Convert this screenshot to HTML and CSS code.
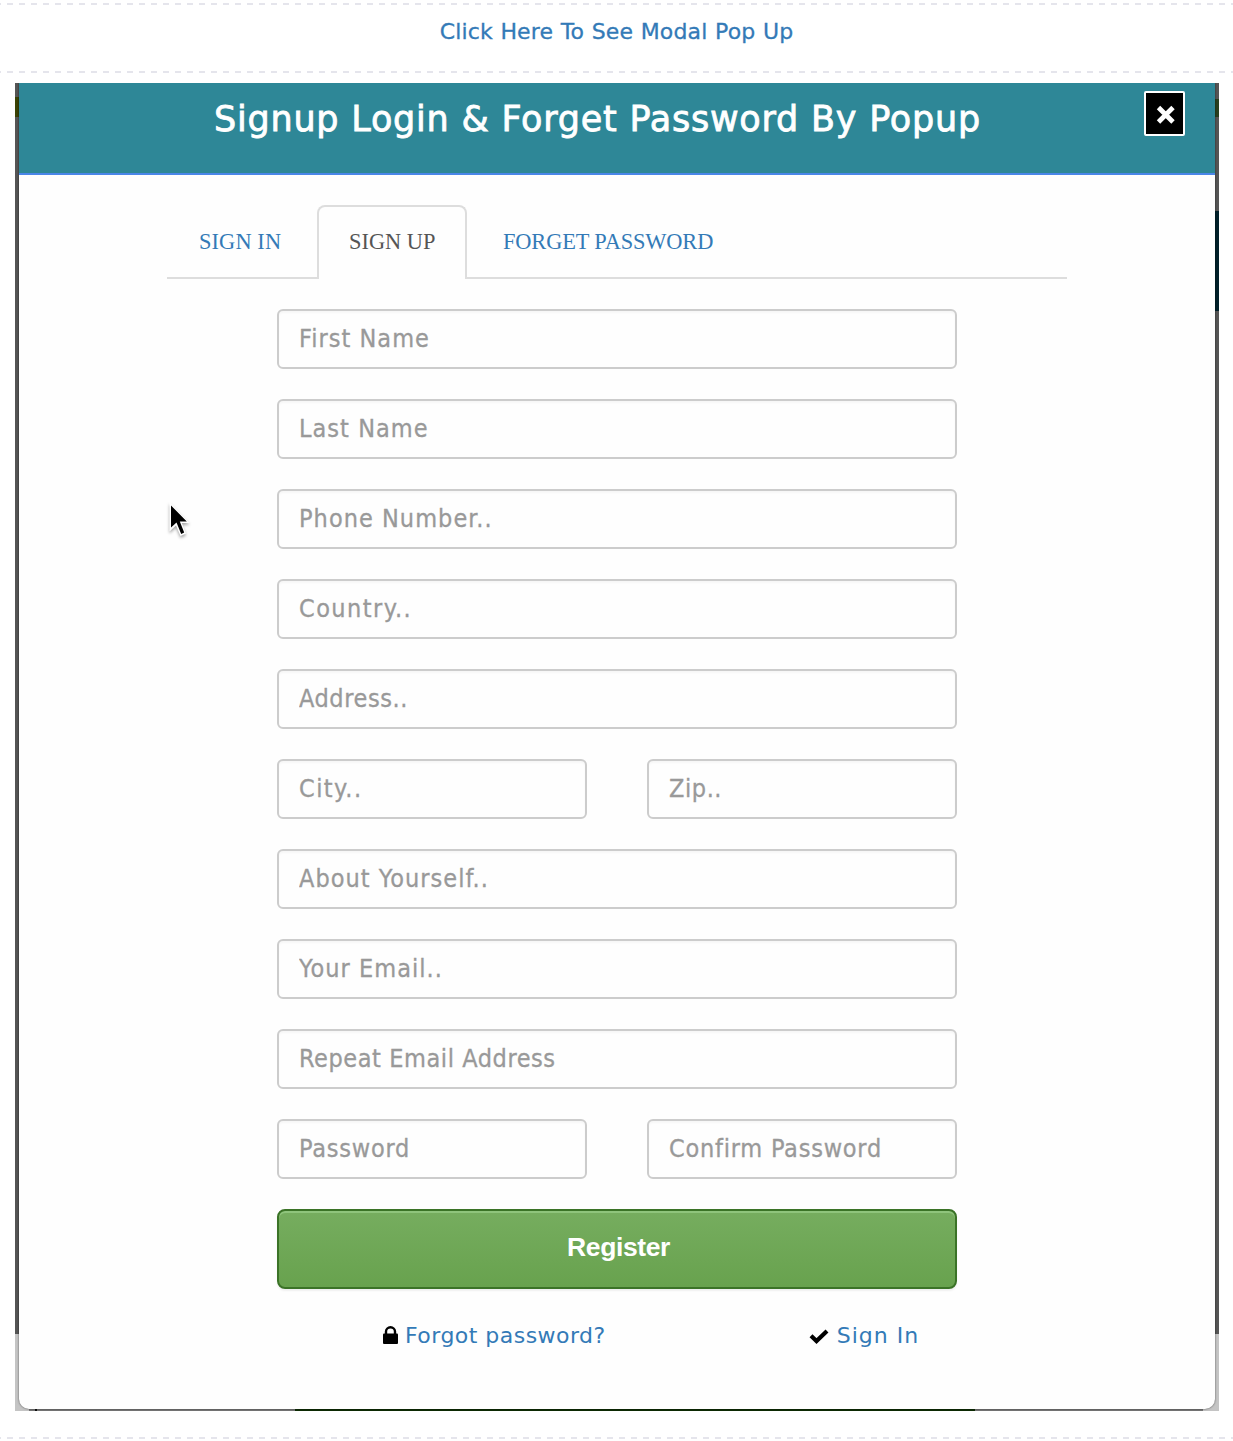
FILE: index.html
```html
<!DOCTYPE html>
<html lang="en">
<head>
<meta charset="utf-8">
<title>Signup Login &amp; Forget Password</title>
<link rel="stylesheet" href="styles.css">
</head>
<body>
<div class="divider"></div>
<p class="trigger"><a href="#">Click Here To See Modal Pop Up</a></p>
<div class="divider"></div>
<main class="backdrop">
  <section class="modal">
    <header class="modal-header">
      <h1 class="modal-title">Signup Login &amp; Forget Password By Popup</h1>
      <button class="close" type="button" aria-label="Close">
        <svg width="22" height="22" viewBox="0 0 22 22"><path d="M4.500 4.500 19 19M19 4.500 4.500 19" stroke="#fff" stroke-width="4.800" fill="none"/></svg>
      </button>
    </header>
    <nav class="tabs">
      <a class="tab" href="#">SIGN IN</a>
      <a class="tab active" href="#">SIGN UP</a>
      <a class="tab" href="#">FORGET PASSWORD</a>
    </nav>
    <form class="form">
      <input class="field wide" placeholder="First Name">
      <input class="field wide" placeholder="Last Name">
      <input class="field wide" placeholder="Phone Number..">
      <input class="field wider" placeholder="Country..">
      <input class="field tight" placeholder="Address..">
      <input class="field half wider" placeholder="City..">
      <input class="field half tight" placeholder="Zip..">
      <input class="field wide" placeholder="About Yourself..">
      <input class="field wide" placeholder="Your Email..">
      <input class="field tight" placeholder="Repeat Email Address">
      <input class="field half" placeholder="Password">
      <input class="field half" placeholder="Confirm Password">
      <button class="register" type="button">Register</button>
    </form>
    <footer class="links">
      <span class="link"><svg class="lock" width="15" height="18" viewBox="0 0 15 18"><path d="M3 8V5.500a4.500 4.200 0 0 1 9 0V8" fill="none" stroke="#000" stroke-width="2.400"/><rect y="7.500" width="15" height="10.500" rx="1"/></svg><a href="#">Forgot password?</a></span>
      <span class="link"><svg class="check" width="20" height="15" viewBox="0 0 20 15"><path d="M2 6.800 7.500 12 18 2" fill="none" stroke="#000" stroke-width="4.200"/></svg><a class="signin" href="#">Sign In</a></span>
    </footer>
    <svg class="cursor" width="26" height="38" viewBox="0 0 26 38"><path d="M2.500 2V31.500L9 25.500 13.500 36 19 33.500 14.800 23H22.500Z" fill="#fff"/><path d="M4 5.500V27.500L9.500 22.500 14.200 34 17.200 32.500 12.800 21.500H19.800Z"/></svg>
  </section>
</main>
<div class="divider"></div>
</body>
</html>
```
FILE: styles.css
```css
* { box-sizing: border-box; }
body {
  margin: 0;
  padding-top: 3px;
  background: #fff;
  font-family: "DejaVu Sans", sans-serif;
}
a { color: #337ab7; text-decoration: none; }
.divider {
  height: 2px;
  background: repeating-linear-gradient(90deg, #e5e5ec 0 6px, transparent 6px 12px) -5px 0 / 1248px 2px;
}
.trigger {
  height: 66px;
  margin: 0;
  padding-top: 11px;
  font-size: 22px;
  line-height: 32px;
  letter-spacing: 0.15px;
  word-spacing: 0.4px;
  text-align: center;
  -webkit-text-stroke: 0.3px #337ab7;
}
.backdrop {
  width: 1204px;
  height: 1328px;
  margin: 10px 14px 26px 15px;
  padding: 0 4px 2px;
  background:
    linear-gradient(#0d2c04, #0d2c04) 280px 100% / 680px 2px no-repeat,
    linear-gradient(#111, #111) 20px 100% / 2px 2px no-repeat,
    linear-gradient(#777, #777) 14px 100% / 1174px 2px no-repeat,
    linear-gradient(#3b4205, #3b4205) 0 14px / 4px 20px no-repeat,
    linear-gradient(#28401f, #28401f) 100% 16px / 4px 18px no-repeat,
    linear-gradient(#00202a, #00202a) 100% 128px / 4px 100px no-repeat,
    linear-gradient(#555 0 1251px, #c4c4c4 1251px);
}
.modal {
  position: relative;
  height: 1326px;
  background: #fefefe;
  border-radius: 0 0 10px 10px;
  box-shadow: 0 0 2px rgba(0, 0, 0, .65);
  clip-path: inset(0 -2px -2px -2px);
}
.modal-header {
  display: flex;
  justify-content: space-between;
  height: 92px;
  padding: 8px 30px 0 195px;
  background: #2e8797;
  border-bottom: 2px solid #4a86e8;
}
.modal-title {
  margin: 0;
  color: #fff;
  font-size: 35px;
  font-weight: 400;
  line-height: 56px;
  letter-spacing: 0.77px;
  white-space: nowrap;
  -webkit-text-stroke: 0.8px #fff;
}
.close {
  display: grid;
  place-items: center;
  width: 41px;
  height: 45px;
  padding: 0;
  background: #000;
  border: 2px solid #fff;
  border-radius: 2px;
}
.tabs {
  display: flex;
  gap: 4px;
  width: 900px;
  height: 74px;
  margin: 30px 0 0 148px;
  border-bottom: 2px solid #ddd;
}
.tab {
  height: 74px;
  padding: 0 30px;
  border: 2px solid transparent;
  border-bottom: 0;
  font: 22.4px/69px "Liberation Serif", serif;
  letter-spacing: -0.13px;
  white-space: nowrap;
}
.tab:first-child {
  width: 146px;
  letter-spacing: 0.1px;
}
.tab.active {
  width: 150px;
  color: #555;
  background: #fefefe;
  border-color: #ddd;
  border-radius: 8px 8px 0 0;
  letter-spacing: 0;
}
.form {
  display: grid;
  grid-template-columns: 310px 310px;
  gap: 30px 60px;
  margin: 30px 0 0 258px;
}
.field {
  grid-column: span 2;
  width: 100%;
  height: 60px;
  padding: 0 20px 2px;
  border: 2px solid #ccc;
  border-radius: 6px;
  background: #fefefe;
  box-shadow: inset 0 2px 2px rgba(0, 0, 0, .03);
  font: 25px "DejaVu Sans Condensed", "DejaVu Sans", sans-serif;
  font-stretch: condensed;
  letter-spacing: 0.77px;
  -webkit-text-stroke: 0.3px #999;
}
.field.wide { letter-spacing: 1.03px; }
.field.wider { letter-spacing: 1.45px; }
.field.tight { letter-spacing: 0.57px; }
.field.half { grid-column: span 1; }
.field::placeholder { color: #999; opacity: 1; }
.register {
  grid-column: span 2;
  height: 80px;
  padding: 0 0 3px 3px;
  color: #fff;
  font: bold 26.5px "Liberation Sans", sans-serif;
  letter-spacing: -0.4px;
  background: linear-gradient(#76ad5f, #68a24e);
  border: 2px solid #3b7327;
  border-radius: 8px;
  box-shadow: inset 0 2px 0 #8fc47c, 0 2px 2px rgba(0, 0, 0, .06);
}
.links {
  display: flex;
  gap: 203px;
  padding: 31px 0 0 364px;
  font-size: 22px;
  line-height: 32px;
  letter-spacing: 0.47px;
}
.link { display: flex; align-items: center; white-space: nowrap; }
.lock { margin: -2px 7px 0 0; }
.check { margin-right: 8px; }
.signin { letter-spacing: 1px; }
.cursor {
  position: absolute;
  left: 148px;
  top: 417px;
  filter: drop-shadow(0 2px 1.5px rgba(0, 0, 0, .35));
}
```
